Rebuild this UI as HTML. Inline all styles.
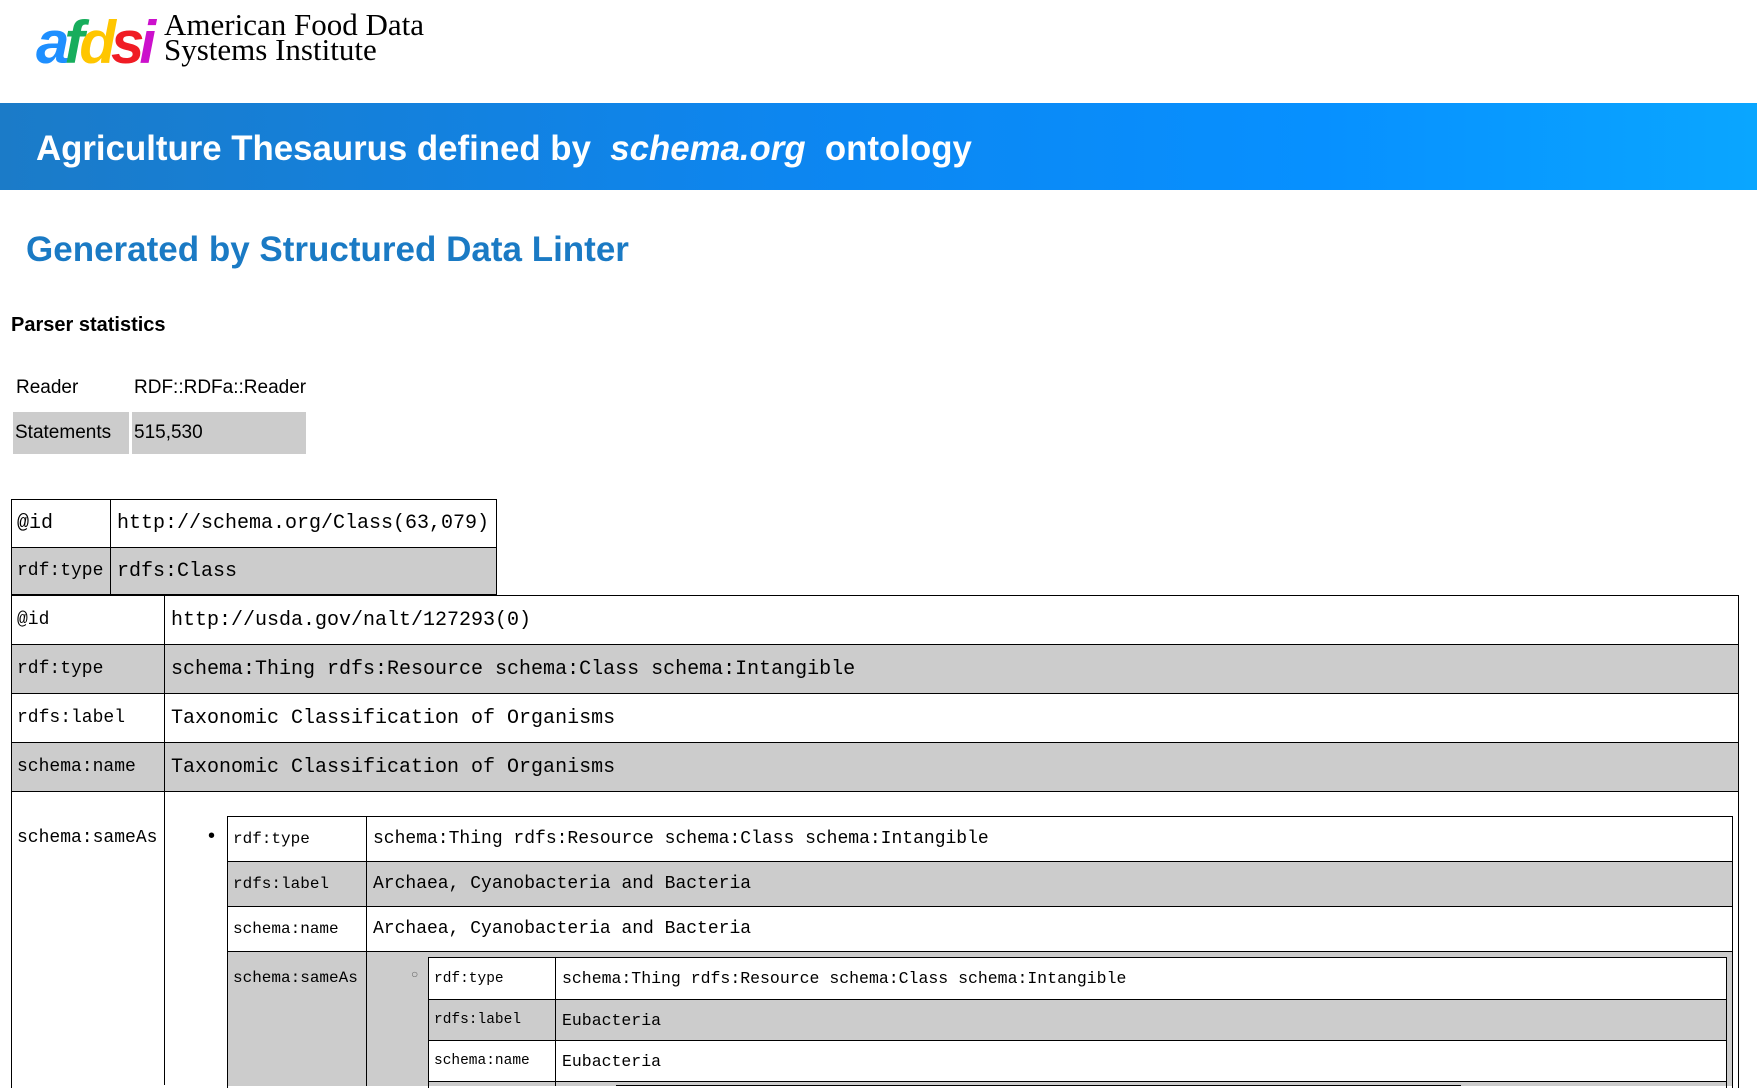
<!DOCTYPE html>
<html><head><meta charset="utf-8"><style>
*{margin:0;padding:0;box-sizing:border-box}
html,body{width:1757px;height:1088px;overflow:hidden}
body{background:#fff;position:relative;font-family:"Liberation Sans",sans-serif;color:#000}
.abs{position:absolute}
.logo{left:36px;top:8px;font:italic bold 60px "Liberation Sans",sans-serif;letter-spacing:-5px;line-height:70px}
.org{left:164px;top:12px;font:31px/25px "Liberation Serif",serif}
.banner{left:0;top:103px;width:1757px;height:87px;background:linear-gradient(90deg,#1b7bc8 0%,#0d86f0 45%,#0790ff 75%,#0aa6ff 100%)}
.banner div{position:absolute;left:36px;top:25px;color:#fff;font:bold 34.8px/42px "Liberation Sans",sans-serif;white-space:nowrap}
.h2{left:26px;top:228px;color:#1a7ac4;font:bold 35px/44px "Liberation Sans",sans-serif}
.h3{left:11px;top:312px;font:bold 20px/26px "Liberation Sans",sans-serif}
.st{font:19px "Liberation Sans",sans-serif}
.t{position:absolute;border:1px solid #000;background:#fff;font-family:"Liberation Mono",monospace;overflow:hidden}
.r{display:flex;border-top:1px solid #000}
.r:first-child{border-top:none}
.k{border-right:1px solid #000;flex:none;padding-left:5px;display:flex;align-items:center}
.v{flex:1;padding-left:6px;display:flex;align-items:center;white-space:nowrap}
.g{background:#ccc}
</style></head><body>
<div class="abs logo"><span style="color:#1e8fff">a</span><span style="color:#17ad5c">f</span><span style="color:#ffc600">d</span><span style="color:#f01c24">s</span><span style="color:#cc10cc">i</span></div>
<div class="abs org">American Food Data<br>Systems Institute</div>
<div class="abs banner"><div>Agriculture Thesaurus defined by &nbsp;<i>schema.org</i>&nbsp; ontology</div></div>
<div class="abs h2">Generated by Structured Data Linter</div>
<div class="abs h3">Parser statistics</div>
<div class="abs st" style="left:16px;top:377px">Reader</div>
<div class="abs st" style="left:134px;top:377px">RDF::RDFa::Reader</div>
<div class="abs" style="left:13px;top:412px;width:116px;height:42px;background:#ccc"></div>
<div class="abs" style="left:132px;top:412px;width:174px;height:42px;background:#ccc"></div>
<div class="abs st" style="left:15px;top:422px">Statements</div>
<div class="abs st" style="left:134px;top:422px">515,530</div>

<div class="t" style="left:11px;top:499px;width:486px;font-size:20px">
 <div class="r" style="height:47px"><div class="k" style="width:99px">@id</div><div class="v">http://schema.org/Class(63,079)</div></div>
 <div class="r g" style="height:47px"><div class="k" style="width:99px;font-size:18px">rdf:type</div><div class="v">rdfs:Class</div></div>
</div>

<div class="t" style="left:11px;top:595px;width:1728px;height:495px;font-size:20px">
 <div class="r" style="height:48px"><div class="k" style="width:153px;font-size:18px">@id</div><div class="v">http://usda.gov/nalt/127293(0)</div></div>
 <div class="r g" style="height:49px"><div class="k" style="width:153px;font-size:18px">rdf:type</div><div class="v">schema:Thing rdfs:Resource schema:Class schema:Intangible</div></div>
 <div class="r" style="height:49px"><div class="k" style="width:153px;font-size:18px">rdfs:label</div><div class="v">Taxonomic Classification of Organisms</div></div>
 <div class="r g" style="height:49px"><div class="k" style="width:153px;font-size:18px">schema:name</div><div class="v">Taxonomic Classification of Organisms</div></div>
 <div class="r" style="height:294px"><div class="k" style="width:153px;font-size:18px;align-items:flex-start;padding-top:36px">schema:sameAs</div><div class="v"></div></div>
</div>
<div class="abs" style="left:208px;top:825px;font-size:20px">•</div>
<div class="t" style="left:227px;top:816px;width:1506px;height:274px;font-size:18px">
 <div class="r" style="height:44px"><div class="k" style="width:139px;font-size:16px">rdf:type</div><div class="v">schema:Thing rdfs:Resource schema:Class schema:Intangible</div></div>
 <div class="r g" style="height:45px"><div class="k" style="width:139px;font-size:16px">rdfs:label</div><div class="v">Archaea, Cyanobacteria and Bacteria</div></div>
 <div class="r" style="height:45px"><div class="k" style="width:139px;font-size:16px">schema:name</div><div class="v">Archaea, Cyanobacteria and Bacteria</div></div>
 <div class="r g" style="height:135px"><div class="k" style="width:139px;font-size:16px;align-items:flex-start;padding-top:17px">schema:sameAs</div><div class="v"></div></div>
</div>
<div class="abs" style="left:411px;top:967px;font-size:12px;color:#666">○</div>
<div class="t" style="left:428px;top:957px;width:1299px;height:133px;font-size:16.5px">
 <div class="r" style="height:41px"><div class="k" style="width:127px;font-size:14.5px">rdf:type</div><div class="v">schema:Thing rdfs:Resource schema:Class schema:Intangible</div></div>
 <div class="r g" style="height:41px"><div class="k" style="width:127px;font-size:14.5px">rdfs:label</div><div class="v">Eubacteria</div></div>
 <div class="r" style="height:41px"><div class="k" style="width:127px;font-size:14.5px">schema:name</div><div class="v">Eubacteria</div></div>
 <div class="r g" style="height:5px"><div class="k" style="width:127px"></div><div class="v"></div></div>
</div>
<div class="abs" style="left:616px;top:1085px;width:845px;height:3px;border-top:1px solid #000;background:#fff"></div>
</body></html>
